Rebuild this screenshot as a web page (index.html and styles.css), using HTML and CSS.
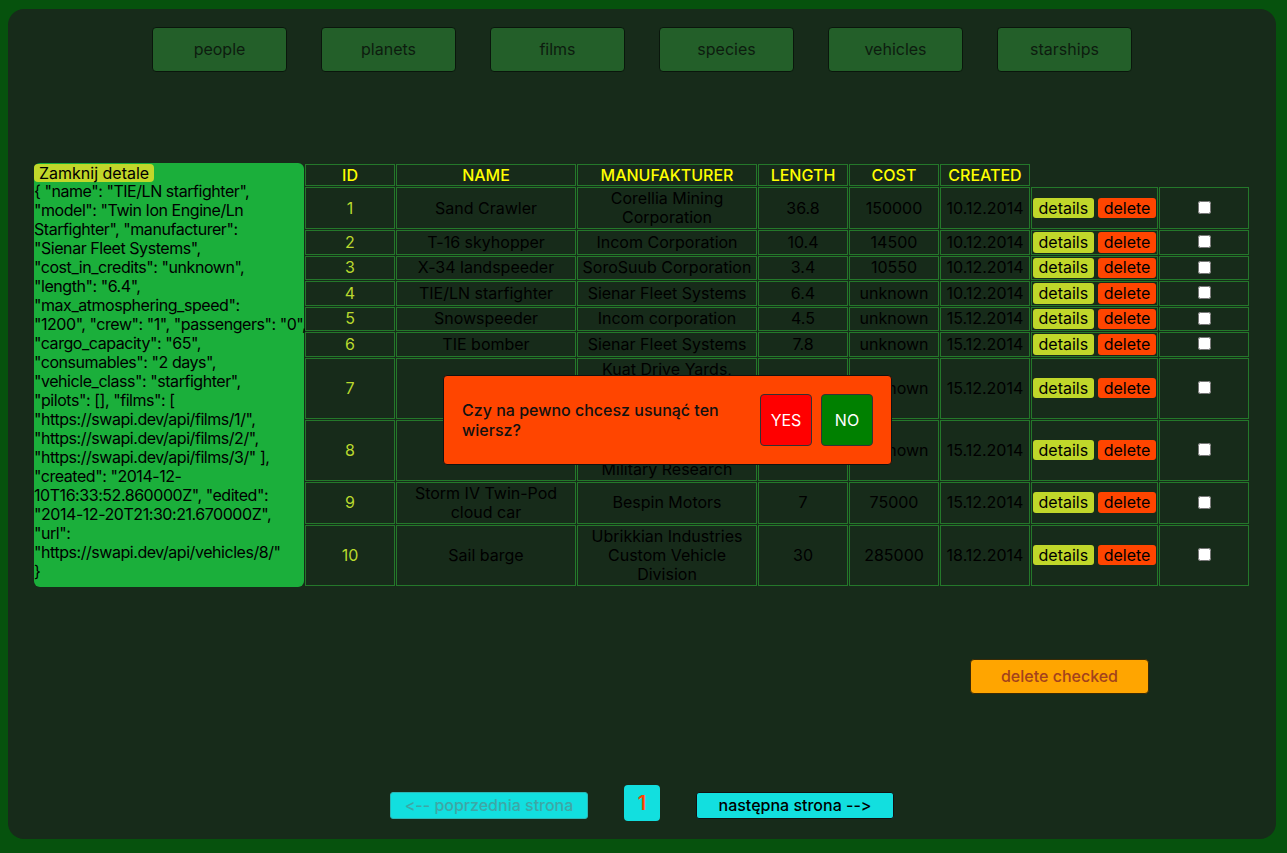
FILE: index.html
```html
<!DOCTYPE html>
<html lang="pl">
<head>
<meta charset="utf-8">
<title>SWAPI vehicles</title>
<link rel="stylesheet" href="styles.css">
</head>
<body>
<div class="app">
  <nav class="nav">
    <button class="nav-btn">people</button>
    <button class="nav-btn">planets</button>
    <button class="nav-btn">films</button>
    <button class="nav-btn">species</button>
    <button class="nav-btn">vehicles</button>
    <button class="nav-btn">starships</button>
  </nav>

  <div class="main">
    <aside class="details">
      <button class="close-btn">Zamknij detale</button>
      <div class="json">{ "name": "TIE/LN starfighter",<br>"model": "Twin Ion Engine/Ln<br>Starfighter", "manufacturer":<br>"Sienar Fleet Systems",<br>"cost_in_credits": "unknown",<br>"length": "6.4",<br>"max_atmosphering_speed":<br>"1200", "crew": "1", "passengers": "0",<br>"cargo_capacity": "65",<br>"consumables": "2 days",<br>"vehicle_class": "starfighter",<br>"pilots": [], "films": [<br>"https://swapi.dev/api/films/1/",<br>"https://swapi.dev/api/films/2/",<br>"https://swapi.dev/api/films/3/" ],<br>"created": "2014-12-<br>10T16:33:52.860000Z", "edited":<br>"2014-12-20T21:30:21.670000Z",<br>"url":<br>"https://swapi.dev/api/vehicles/8/"<br>}</div>
    </aside>

    <table class="grid">
      <thead>
        <tr>
          <th class="c-id">ID</th>
          <th class="c-name">NAME</th>
          <th class="c-man">MANUFAKTURER</th>
          <th class="c-len">LENGTH</th>
          <th class="c-cost">COST</th>
          <th class="c-date">CREATED</th>
        </tr>
      </thead>
      <tbody>
        <tr>
          <td class="c-id id">1</td><td class="c-name">Sand Crawler</td><td class="c-man">Corellia Mining Corporation</td><td class="c-len">36.8</td><td class="c-cost">150000</td><td class="c-date">10.12.2014</td>
          <td class="c-act"><button class="det-btn">details</button> <button class="del-btn">delete</button></td><td class="c-chk"><input type="checkbox"></td>
        </tr>
        <tr>
          <td class="c-id id">2</td><td class="c-name">T-16 skyhopper</td><td class="c-man">Incom Corporation</td><td class="c-len">10.4</td><td class="c-cost">14500</td><td class="c-date">10.12.2014</td>
          <td class="c-act"><button class="det-btn">details</button> <button class="del-btn">delete</button></td><td class="c-chk"><input type="checkbox"></td>
        </tr>
        <tr>
          <td class="c-id id">3</td><td class="c-name">X-34 landspeeder</td><td class="c-man">SoroSuub Corporation</td><td class="c-len">3.4</td><td class="c-cost">10550</td><td class="c-date">10.12.2014</td>
          <td class="c-act"><button class="det-btn">details</button> <button class="del-btn">delete</button></td><td class="c-chk"><input type="checkbox"></td>
        </tr>
        <tr>
          <td class="c-id id">4</td><td class="c-name">TIE/LN starfighter</td><td class="c-man">Sienar Fleet Systems</td><td class="c-len">6.4</td><td class="c-cost">unknown</td><td class="c-date">10.12.2014</td>
          <td class="c-act"><button class="det-btn">details</button> <button class="del-btn">delete</button></td><td class="c-chk"><input type="checkbox"></td>
        </tr>
        <tr>
          <td class="c-id id">5</td><td class="c-name">Snowspeeder</td><td class="c-man">Incom corporation</td><td class="c-len">4.5</td><td class="c-cost">unknown</td><td class="c-date">15.12.2014</td>
          <td class="c-act"><button class="det-btn">details</button> <button class="del-btn">delete</button></td><td class="c-chk"><input type="checkbox"></td>
        </tr>
        <tr>
          <td class="c-id id">6</td><td class="c-name">TIE bomber</td><td class="c-man">Sienar Fleet Systems</td><td class="c-len">7.8</td><td class="c-cost">unknown</td><td class="c-date">15.12.2014</td>
          <td class="c-act"><button class="det-btn">details</button> <button class="del-btn">delete</button></td><td class="c-chk"><input type="checkbox"></td>
        </tr>
        <tr>
          <td class="c-id id">7</td><td class="c-name">AT-AT</td><td class="c-man">Kuat Drive Yards, Imperial Department of Military Research</td><td class="c-len">20</td><td class="c-cost">unknown</td><td class="c-date">15.12.2014</td>
          <td class="c-act"><button class="det-btn">details</button> <button class="del-btn">delete</button></td><td class="c-chk"><input type="checkbox"></td>
        </tr>
        <tr>
          <td class="c-id id">8</td><td class="c-name">AT-ST</td><td class="c-man">Kuat Drive Yards, Imperial Department of Military Research</td><td class="c-len">2</td><td class="c-cost">unknown</td><td class="c-date">15.12.2014</td>
          <td class="c-act"><button class="det-btn">details</button> <button class="del-btn">delete</button></td><td class="c-chk"><input type="checkbox"></td>
        </tr>
        <tr>
          <td class="c-id id">9</td><td class="c-name">Storm IV Twin-Pod cloud car</td><td class="c-man">Bespin Motors</td><td class="c-len">7</td><td class="c-cost">75000</td><td class="c-date">15.12.2014</td>
          <td class="c-act"><button class="det-btn">details</button> <button class="del-btn">delete</button></td><td class="c-chk"><input type="checkbox"></td>
        </tr>
        <tr>
          <td class="c-id id">10</td><td class="c-name">Sail barge</td><td class="c-man">Ubrikkian Industries Custom Vehicle Division</td><td class="c-len">30</td><td class="c-cost">285000</td><td class="c-date">18.12.2014</td>
          <td class="c-act"><button class="det-btn">details</button> <button class="del-btn">delete</button></td><td class="c-chk"><input type="checkbox"></td>
        </tr>
      </tbody>
    </table>
  </div>

  <div class="bulk">
    <button class="bulk-btn">delete checked</button>
  </div>

  <div class="pager">
    <button class="page-btn disabled">&lt;-- poprzednia strona</button>
    <span class="page-num">1</span>
    <button class="page-btn">następna strona --&gt;</button>
  </div>

  <div class="confirm">
    <p class="confirm-text">Czy na pewno chcesz usunąć ten wiersz?</p>
    <button class="yes-btn">YES</button>
    <button class="no-btn">NO</button>
  </div>
</div>
</body>
</html>
```

FILE: styles.css
```css
html {
  background: #06520d;
}
body {
  margin: 9px 11px 14px 8px;
  font-family: Inter, "Open Sans", "Liberation Sans", sans-serif;
  font-size: 16px;
  line-height: 19px;
  color: #000;
  font-feature-settings: "calt" 0, "liga" 0;
  font-variant-ligatures: none;
}
button {
  font-family: inherit;
  font-size: 16px;
  line-height: 19px;
  font-feature-settings: "calt" 0, "liga" 0;
  font-variant-ligatures: none;
  cursor: pointer;
}
.app {
  position: relative;
  width: 1268px;
  height: 830px;
  box-sizing: border-box;
  background: #172b1a;
  border-radius: 16px;
  padding: 18px 0 18px 0;
  display: flex;
  flex-direction: column;
}

/* top navigation */
.nav {
  display: flex;
  justify-content: center;
  gap: 34px;
}
.nav-btn {
  width: 135px;
  height: 45px;
  background: #235f29;
  border: 1px solid #0a160c;
  border-radius: 4px;
  color: #0d1c0f;
  padding: 0;
}

/* main row */
.main {
  margin-top: 91px;
  display: flex;
  justify-content: center;
  align-items: stretch;
}
.details {
  width: 270px;
  background: #1baf3b;
  border-radius: 6px;
  box-sizing: border-box;
}
.close-btn {
  display: block;
  margin: 1px 0 0 0;
  background: #c1d72a;
  border: none;
  border-radius: 4px;
  padding: 0 5px;
  height: 18px;
  line-height: 18px;
  color: #000;
}
.json {
  white-space: nowrap;
  font-size: 16px;
  letter-spacing: -0.45px;
}

/* table */
.grid {
  border-collapse: separate;
  border-spacing: 1px;
}
.grid th,
.grid td {
  box-sizing: border-box;
  border: 1px solid #24782a;
  padding: 1px;
  text-align: center;
  vertical-align: middle;
  font-weight: normal;
}
.grid th {
  color: #ffff00;
  font-weight: 500;
  padding: 1px 1px 0;
}
.c-id { width: 90px; }
.c-name { width: 180px; }
.c-man { width: 180px; }
.c-len { width: 90px; }
.c-cost { width: 90px; }
.c-date { width: 90px; }
.c-act { width: 127px; text-align: left !important; white-space: nowrap; }
.c-chk { width: 90px; }
.grid td.id {
  color: #b9d92e;
}
.det-btn,
.del-btn {
  border: none;
  border-radius: 3px;
  padding: 0.75px 5.5px;
  color: #000;
}
.det-btn { background: #c0d72a; }
.del-btn { background: #ff4500; }
.c-chk input {
  margin: 3px;
}

/* bulk delete */
.bulk {
  margin-top: 72px;
  padding-left: 962px;
}
.bulk-btn {
  width: 179px;
  height: 35px;
  background: #ffa500;
  border: 1px solid #3a2a05;
  border-radius: 4px;
  color: #a3421d;
  font-weight: 500;
}

/* pagination */
.pager {
  margin-top: auto;
  display: flex;
  justify-content: center;
  align-items: center;
  gap: 36px;
}
.page-btn {
  width: 198px;
  height: 27px;
  background: #12dfdf;
  border: 1px solid #111;
  border-radius: 3px;
  color: #000;
  font-weight: 500;
  padding: 0;
  margin-top: 5px;
}
.page-btn.disabled {
  color: #3ea7a6;
  border-color: #2bb5b5;
}
.page-num {
  width: 36px;
  height: 36px;
  background: #12dfdf;
  border-radius: 4px;
  color: #ff4500;
  font-size: 20px;
  font-weight: 600;
  display: flex;
  align-items: center;
  justify-content: center;
}

/* confirm dialog */
.confirm {
  position: absolute;
  left: 435px;
  top: 366px;
  width: 449px;
  height: 90px;
  box-sizing: border-box;
  background: #ff4500;
  border: 1px solid #111;
  border-radius: 4px;
  display: flex;
  align-items: center;
  padding: 0 18px;
  gap: 9px;
}
.confirm-text {
  margin: 0 10px 0 0;
  flex: 1;
  font-weight: 500;
  line-height: 20px;
  color: #111;
}
.yes-btn,
.no-btn {
  width: 52px;
  height: 52px;
  border: 1px solid #333;
  border-radius: 4px;
  color: #fff;
  padding: 0;
  flex: none;
}
.yes-btn { background: #ff0000; }
.no-btn { background: #008000; }
```
